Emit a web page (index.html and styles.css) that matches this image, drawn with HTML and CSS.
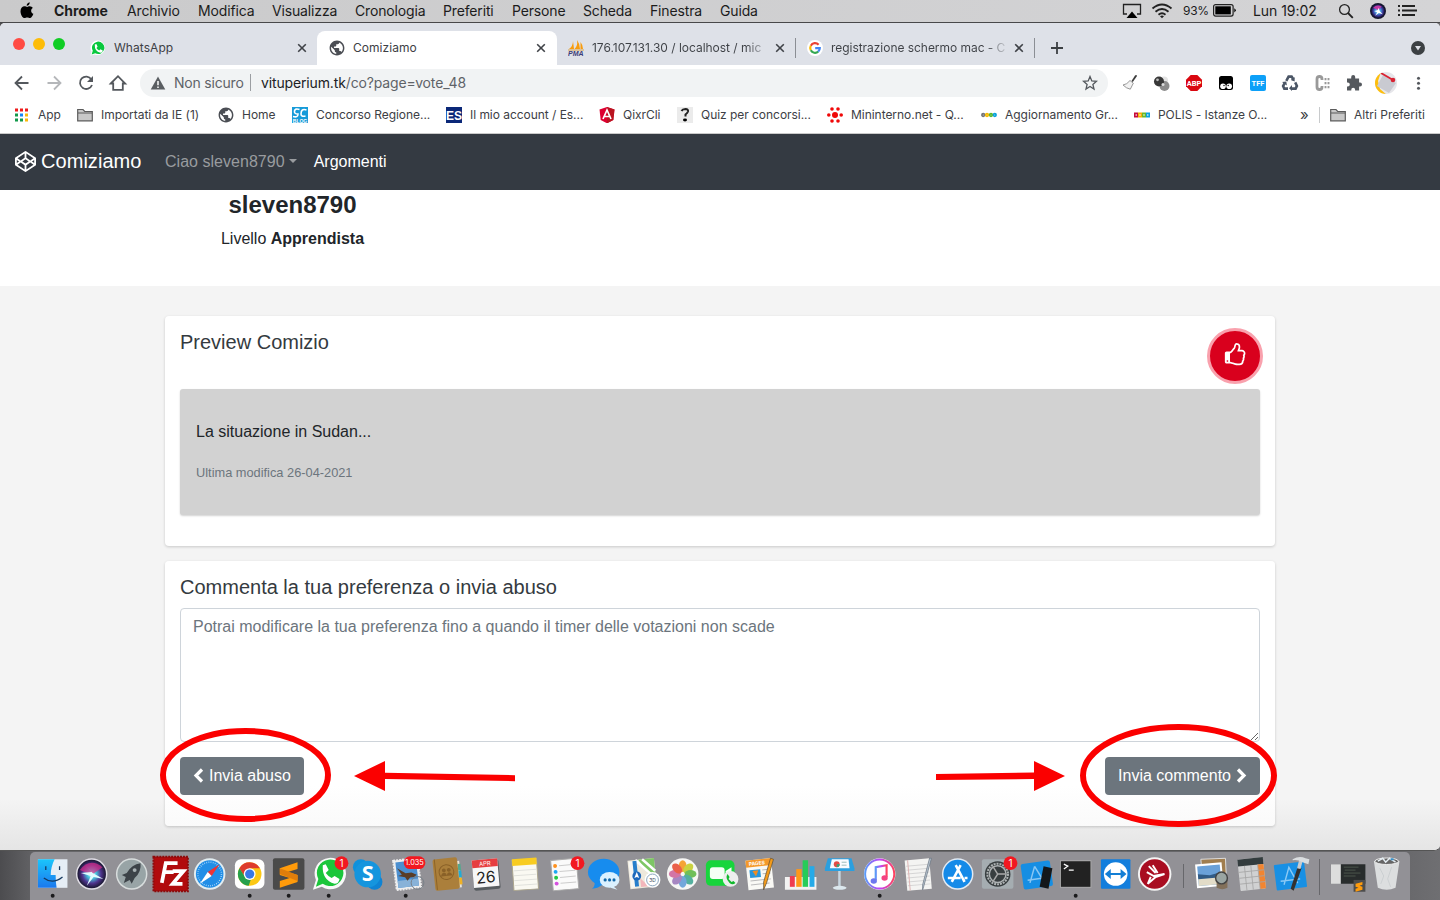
FILE: index.html
```html
<!DOCTYPE html>
<html lang="it">
<head>
<meta charset="utf-8">
<title>Comiziamo</title>
<link rel="stylesheet" href="styles.css">
</head>
<body>
<div class="desktop">
<header class="menubar">
  <svg class="apple" width="14" height="17" viewBox="0 0 14 17"><path d="M9.6 4.3c1.500 0 2.700.8 3.200 1.600-2.400 1.400-2.100 4.800.6 5.900-.6 1.800-2 4.300-3.500 4.300-1 0-1.400-.6-2.700-.6s-1.700.6-2.700.6C2.700 16.100.5 13 .5 9.300c0-3.200 2-5 4-5 1.100 0 2 .7 2.700.7.600 0 1.400-.7 2.400-.7zM9.700.3c.2 1.800-1.300 3.600-3 3.500C6.500 2.200 8 .5 9.700.3z"/></svg>
  <nav class="menus"><b>Chrome</b><span>Archivio</span><span>Modifica</span><span>Visualizza</span><span>Cronologia</span><span>Preferiti</span><span>Persone</span><span>Scheda</span><span>Finestra</span><span>Guida</span></nav>
  <svg class="airplay" width="20" height="16" viewBox="0 0 20 16"><path d="M5 11H1.500V1.500h17V11H15" fill="none" stroke="#222" stroke-width="1.300"/><path d="M10 8.500l5.500 6.500h-11z"/></svg>
  <svg class="wifi" width="22" height="16" viewBox="0 0 22 16" fill="none" stroke="#222" stroke-width="1.900"><path d="M1.500 5.500q9.500-8 19 0M4.500 8.800q6.500-5.400 13 0M7.500 11.700q3.500-2.800 7 0"/><path d="M9 13.300q2-1.400 4 0l-2 2z" fill="#222" stroke="none"/></svg>
  <span class="percent">93%</span>
  <svg class="battery" width="24" height="13" viewBox="0 0 24 13"><rect x=".6" y=".6" width="19.500" height="11.500" rx="2" fill="none" stroke="#222" stroke-width="1.200"/><rect x="2.300" y="2.300" width="15.500" height="8.100"/><path d="M21.300 4.200q3 2.100 0 4.200z"/></svg>
  <span class="clock">Lun 19:02</span>
  <svg class="search" width="16" height="16" viewBox="0 0 16 16" fill="none" stroke="#222" stroke-width="1.300"><circle cx="6.500" cy="6.500" r="4.900"/><path d="M10 10l4.800 4.800" stroke-width="1.800"/></svg>
  <svg class="siri" width="16" height="16" viewBox="0 0 40 40"><defs><radialGradient id="sg"><stop offset="0" stop-color="#fff"/><stop offset=".35" stop-color="#4ba8e8"/><stop offset=".75" stop-color="#3a3092"/><stop offset="1" stop-color="#151533"/></radialGradient></defs><circle cx="20" cy="20" r="20" fill="#15152e"/><circle cx="20" cy="20" r="17" fill="url(#sg)"/><path d="M8 12Q18 2 29 9L21 18z" fill="#c43aa5"/><path d="M21 12l3 8 8 8-10-3-9 7 5-9-8-3 9-1z" fill="#fff"/></svg>
  <svg class="list" width="19" height="13" viewBox="0 0 19 13" stroke="#222" stroke-width="1.800"><path d="M0 2h2M4 2h13M0 6.500h2M4 6.500h15M0 11h2M4 11h13"/></svg>
</header>

<main class="window">
  <div class="tabs">
    <div class="lights"><i class="red"></i><i class="yellow"></i><i class="green"></i></div>
    <div class="tab">
      <svg width="16" height="16" viewBox="0 0 40 40"><path d="M1 39l3-10A18 18 0 1 1 12 36z" fill="#fff"/><path d="M4 36l3-9A15.500 15.500 0 1 1 13 33z" fill="#08c83e"/><path d="M12 11l4-1 3 7-3 3q3 5 7 6l3-3 6 3q0 6-6 6Q11 28 12 11z" fill="#fff"/></svg>
      <span>WhatsApp</span><svg class="x" width="10" height="10" viewBox="0 0 10 10"><path d="M1.200 1.200l7.600 7.600m0-7.600L1.200 8.800"/></svg>
    </div>
    <div class="tab active">
      <svg width="16" height="16" viewBox="1.200 1.200 21.600 21.600"><path d="M12 2C6.480 2 2 6.480 2 12s4.480 10 10 10 10-4.480 10-10S17.520 2 12 2zm-1 17.930c-3.950-.49-7-3.850-7-7.930 0-.62.08-1.210.21-1.790L9 15v1c0 1.100.9 2 2 2v1.930zm6.900-2.540c-.26-.81-1-1.390-1.900-1.390h-1v-3c0-.55-.45-1-1-1H8v-2h2c.55 0 1-.45 1-1V7h2c1.100 0 2-.9 2-2v-.41c2.930 1.190 5 4.060 5 7.410 0 2.080-.8 3.970-2.100 5.390z" class="globe"/></svg>
      <span>Comiziamo</span><svg class="x" width="10" height="10" viewBox="0 0 10 10"><path d="M1.200 1.200l7.600 7.600m0-7.600L1.200 8.800"/></svg>
    </div>
    <div class="tab line">
      <svg width="16" height="16" viewBox="0 0 16 16"><path d="M1 9q4-3 4-8l1 8zM6.500 9Q10 6 9 0q3 4 3 9zM12.500 9V2q2.500 3 2.500 7z" fill="#f89c0e"/><path d="M0 10h16" stroke="#d9a34a"/><text x="0" y="16" class="pma">PMA</text></svg>
      <span class="fade">176.107.131.30 / localhost / mic</span><svg class="x" width="10" height="10" viewBox="0 0 10 10"><path d="M1.200 1.200l7.600 7.600m0-7.600L1.200 8.800"/></svg>
    </div>
    <div class="tab line">
      <svg width="16" height="16" viewBox="0 0 16 16" fill="none" stroke-width="2.200"><circle cx="8" cy="8" r="8" fill="#fff"/><path d="M11.600 4.700A4.800 4.800 0 0 0 3.800 5.700" stroke="#ea4335"/><path d="M3.800 5.700a4.800 4.800 0 0 0 0 4.600" stroke="#fbbc05"/><path d="M3.800 10.300a4.800 4.800 0 0 0 7.400 1.300" stroke="#34a853"/><path d="M11.200 11.600Q12.800 10.200 12.800 8.100H8.200" stroke="#4285f4"/></svg>
      <span class="fade tight">registrazione schermo mac - C</span><svg class="x" width="10" height="10" viewBox="0 0 10 10"><path d="M1.200 1.200l7.600 7.600m0-7.600L1.200 8.800"/></svg>
    </div>
    <svg class="plus" width="12" height="12" viewBox="0 0 12 12"><path d="M6 0v12M0 6h12" stroke="#3c4043" stroke-width="1.800"/></svg>
    <svg class="more" width="14" height="14" viewBox="0 0 14 14"><circle cx="7" cy="7" r="7" fill="#3c4043"/><path d="M4 5h6l-3 4.600z" fill="#dee1e8"/></svg>
  </div>

  <div class="toolbar">
    <svg viewBox="0 0 32 32"><path d="M29 16H16m6.500-6.500L16 16l6.500 6.500" class="ic" transform="translate(-6.500)"/></svg>
    <svg viewBox="0 0 32 32"><path d="M9.500 16h13M16 9.500l6.500 6.500-6.500 6.500" class="ic dim"/></svg>
    <svg viewBox="0 0 32 32"><path d="M21.300 12.200A6.200 6.200 0 1 0 22 18" class="ic"/><path d="M23 9v6h-6z" fill="#54585d"/></svg>
    <svg viewBox="0 0 32 32"><path d="M8.800 16.500L16 9.200l7.200 7.300h-2.400v6.300h-9.600v-6.300z" class="ic"/></svg>
    <div class="omnibox">
      <svg width="16" height="14" viewBox="0 0 16 14"><path d="M8 .5L15.300 13.500H.7z" fill="#5a5e62"/><path d="M8 5v4.300M8 10.500v1.600" stroke="#fff" stroke-width="1.500"/></svg>
      <span class="ns">Non sicuro</span>
      <span class="url"><b>vituperium.tk</b>/co?page=vote_48</span>
      <svg class="star" width="16" height="16" viewBox="0 0 16 16"><path d="M8 1.500l1.800 4.400 4.700.4-3.600 3.100 1.100 4.600-4-2.500L4 14l1.100-4.600-3.600-3.100 4.700-.4z" fill="none" stroke="#54585d" stroke-width="1.300"/></svg>
    </div>
    <svg viewBox="0 0 32 32"><path d="M17.500 14l3.500-5.500q1.500-1 2 .5L18.800 15z" fill="#3c3c3c"/><path d="M16 13.500l3.300 2.700-3 6q-4-.8-7.300-4.200 4-.5 7-4.500z" fill="#f2f2f2" stroke="#8d8d8d" stroke-width=".9"/></svg>
    <svg viewBox="0 0 32 32"><circle cx="18" cy="13.500" r="4" fill="#e4e4e4"/><circle cx="18.500" cy="19" r="5" fill="#8c8c8c"/><circle cx="13" cy="14.500" r="5" fill="#383838"/><circle cx="11.500" cy="12.800" r="1.400" fill="#bbb"/><circle cx="17" cy="17.500" r="1.500" fill="#ddd"/></svg>
    <svg viewBox="0 0 32 32"><path d="M12.700 8h6.600L24 12.700v6.600L19.300 24h-6.600L8 19.300v-6.600z" fill="#da0710"/><text x="16" y="19" class="abp">ABP</text></svg>
    <svg viewBox="0 0 32 32"><rect x="9" y="9" width="14" height="14" rx="2.500"/><circle cx="13" cy="19.300" r="2.800" fill="#fff"/><circle cx="19.200" cy="19.300" r="2.800" fill="#fff"/><circle cx="14" cy="18.500" r=".7"/><circle cx="18.200" cy="18.500" r=".7"/></svg>
    <svg viewBox="0 0 32 32"><rect x="8" y="8" width="16" height="16" rx="2" fill="#0da0f8"/><text x="16" y="19" class="abp">TFF</text></svg>
    <svg viewBox="0 0 32 32" fill="none" stroke="#4b5666" stroke-width="2.600"><path d="M12.300 13.800l2.300-4.200h3l2 3.200M21.200 15.400l1.700 3.500-1.300 2.700h-4M14 21.600h-3.700l-1.200-2.500 1.600-2.900"/><path d="M20.500 10l.2 4.500-4-1.500zM18 18v6l-3-2.800zM8 15l4.300-.6.600 4z" fill="#4b5666" stroke="none"/></svg>
    <svg viewBox="0 0 32 32"><path d="M16 13v-1q0-2.500-2.500-2.500T11 12v8q0 2.500 2.500 2.500T16 20v-1" fill="none" stroke="#999" stroke-width="2.800"/><path d="M19.500 11v2.200m0 1.800v2.200m0 1.800v2.200m3-10.200v2.200m0 1.800v2.200m0 1.800v2.200" stroke="#999" stroke-width="1.900"/></svg>
    <svg viewBox="0 0 32 32"><path d="M9 11.500h4.200v-1.400a2 2 0 0 1 4 0v1.400h3.900v4.100h.9a2 2 0 0 1 0 4h-.9v3.900h-4v-.9a1.900 1.900 0 0 0-3.800 0v.9H9v-3.900h.8a2 2 0 0 0 0-4H9z" fill="#54585d"/></svg>
    <svg viewBox="0 0 32 32"><defs><clipPath id="av"><circle cx="16" cy="16" r="11"/></clipPath></defs><g clip-path="url(#av)"><path d="M5 5h22v22H5z" fill="#e6e6ea"/><path d="M5 5h6l-3 9 2 8 7 6H5z" fill="#fdbe0d"/><path d="M13 8l13 8-7 10-12-7z" fill="#c9cad1"/><path d="M11 6l12 7" stroke="#d92333" stroke-width="2"/><circle cx="23" cy="13" r="2.300" fill="#d92333"/></g></svg>
    <svg viewBox="0 0 32 32"><g fill="#54585d"><circle cx="16.500" cy="11.200" r="1.500"/><circle cx="16.500" cy="16.200" r="1.500"/><circle cx="16.500" cy="21.200" r="1.500"/></g></svg>
  </div>

  <div class="bookmarks">
    <div><svg viewBox="0 0 16 16"><path d="M1 3h3m2 0h3m2 0h3" stroke="#ee1b1b" stroke-width="3"/><path d="M1 8h3" stroke="#12994b" stroke-width="3"/><path d="M6 8h3" stroke="#1785f5" stroke-width="3"/><path d="M11 8h3m-3 5h3" stroke="#fbb709" stroke-width="3"/><path d="M1 13h3m2 0h3" stroke="#12994b" stroke-width="3"/></svg><span>App</span></div>
    <div><svg viewBox="0 0 16 16"><path d="M.7 13.800V2.500H6l1.700 2h7.600v9.300z" fill="#c8c8c8" stroke="#5b5b5b" stroke-width="1.200"/><path d="M1 6h14" stroke="#5b5b5b"/></svg><span>Importati da IE (1)</span></div>
    <div><svg viewBox="1.200 1.200 21.600 21.600"><path d="M12 2C6.480 2 2 6.480 2 12s4.480 10 10 10 10-4.480 10-10S17.520 2 12 2zm-1 17.930c-3.950-.49-7-3.850-7-7.930 0-.62.08-1.210.21-1.790L9 15v1c0 1.100.9 2 2 2v1.930zm6.900-2.540c-.26-.81-1-1.390-1.900-1.390h-1v-3c0-.55-.45-1-1-1H8v-2h2c.55 0 1-.45 1-1V7h2c1.100 0 2-.9 2-2v-.41c2.930 1.190 5 4.060 5 7.410 0 2.080-.8 3.970-2.100 5.390z" class="globe"/></svg><span>Home</span></div>
    <div><svg viewBox="0 0 16 16"><path d="M0 0h16v16H0z" fill="#179bd9"/><path d="M7.500 2.500Q3 1 2.500 4t3.500 3q0 4-5 2.500M14.500 3Q9 1 9 7q0 3 4.500 2" fill="none" stroke="#fff" stroke-width="1.600"/><text x="8" y="15.500" class="tiny">BLOG</text></svg><span>Concorso Regione...</span></div>
    <div><svg viewBox="0 0 16 16"><path d="M0 0h16v16H0z" fill="#0b2878"/><text x="8" y="13" class="es">ES</text></svg><span>Il mio account / Es...</span></div>
    <div><svg viewBox="0 0 16 16"><path d="M8 0l7.500 2.600L14.300 13 8 16.300 1.700 13 .5 2.600z" fill="#dd0031"/><path d="M8 0l7.500 2.600L14.300 13 8 16.300z" fill="#b91420"/><path d="M4 12L8 3l4 9M5.500 9.500h5" fill="none" stroke="#fff" stroke-width="1.700"/></svg><span>QixrCli</span></div>
    <div><svg viewBox="0 0 16 16"><path d="M0 0h16v16H0z" fill="#ebebeb"/><path d="M4.500 4q1-2 4-2 3 .2 2.500 2.500Q10.500 6 8.500 7.500v2" fill="none" stroke="#222" stroke-width="2"/><ellipse cx="8" cy="13" rx="2" ry="1.400"/></svg><span>Quiz per concorsi...</span></div>
    <div><svg viewBox="0 0 16 16" fill="#f00808"><circle cx="8" cy="8" r="3"/><circle cx="5" cy="2" r="1.800"/><circle cx="11" cy="2" r="1.800"/><circle cx="1.800" cy="8" r="1.800"/><circle cx="14.200" cy="8" r="1.800"/><circle cx="5" cy="14" r="1.800"/><circle cx="11" cy="14" r="1.800"/></svg><span>Mininterno.net - Q...</span></div>
    <div><svg viewBox="0 0 16 16" fill="none" stroke-width="1.700"><circle cx="2.200" cy="8" r="1.300" stroke="#777"/><circle cx="6" cy="8" r="1.300" stroke="#f5b900"/><circle cx="10" cy="8" r="1.300" stroke="#5ab62c"/><circle cx="13.800" cy="8" r="1.300" stroke="#0aa2dd"/></svg><span>Aggiornamento Gr...</span></div>
    <div><svg viewBox="0 0 16 16"><path d="M0 5.500h4v5H0z" fill="#c50b3b"/><path d="M4 5.500h4v5H4z" fill="#f4ae00"/><path d="M8 5.500h4v5H8z" fill="#67b82e"/><path d="M12 5.500h4v5h-4z" fill="#0aa2dd"/><g fill="#fff"><circle cx="2.200" cy="8" r=".8"/><circle cx="6" cy="8" r=".8"/><circle cx="10" cy="8" r=".8"/><circle cx="13.800" cy="8" r=".8"/></g></svg><span>POLIS - Istanze O...</span></div>
    <div class="chev">»</div>
    <div class="other"><svg viewBox="0 0 16 16"><path d="M.7 13.800V2.500H6l1.700 2h7.600v9.300z" fill="#c8c8c8" stroke="#5b5b5b" stroke-width="1.200"/><path d="M1 6h14" stroke="#5b5b5b"/></svg><span>Altri Preferiti</span></div>
  </div>

  <section class="page">
    <nav class="navbar">
      <svg width="21" height="21" viewBox="0 0 1792 1792"><path fill="#fff" d="M216 1169l603 402v-359l-334-223zm-62-144l193-129-193-129v258zm819 546l603-402-269-180-334 223v359zm-77-494l272-182-272-182-272 182zm-411-274l334-223v-359l-603 402zm960 93l193 129v-258zm-138-93l269-180-603-402v359zm485-180v546q0 41-34 64l-819 546q-21 13-43 13t-43-13l-819-546q-34-23-34-64v-546q0-41 34-64l819-546q21-13 43-13t43 13l819 546q34 23 34 64z"/></svg>
      <span class="brand">Comiziamo</span><span class="hello">Ciao sleven8790</span><i class="caret"></i><span class="topics">Argomenti</span>
    </nav>
    <div class="profile"><div class="person"><h1>sleven8790</h1><p>Livello <b>Apprendista</b></p></div></div>
    <div class="content">
      <article class="card preview">
        <div class="head"><h2>Preview Comizio</h2>
          <button class="vote"><svg width="24" height="24" viewBox="0 0 1792 1792"><path fill="#fff" d="M320 1344q0-26-19-45t-45-19-45 19-19 45 19 45 45 19 45-19 19-45zm1152-576q0-51-39-89.500t-89-38.500h-352q0-58 48-159.500t48-160.500q0-98-32-145t-128-47q-26 26-38 85t-30.500 125.500-59.500 109.500q-22 23-77 91-4 5-23 30t-31.500 41-34.500 42.500-40 44-38.500 35.500-40 27-35.500 9h-32v640h32q13 0 31.500 3t33 6.500 38 11 35 11.500 35.500 12.500 29 10.500q211 73 342 73h121q192 0 192-167 0-26-5-56 30-16 47.500-52.500t17.500-73.500-18-69q53-50 53-119 0-25-10-55.500t-25-47.500q32-1 53.500-47t21.500-81zm128-1q0 89-49 163 9 33 9 69 0 77-38 144 3 21 3 43 0 101-60 178 1 139-85 219.500t-227 80.500h-129q-96 0-189.500-22.500t-216.500-65.500q-116-40-138-40h-288q-53 0-90.500-37.500t-37.500-90.500v-640q0-53 37.500-90.500t90.500-37.500h274q36-24 137-155 58-75 107-128 24-25 35.500-85.500t30.500-126.500 62-108q39-37 90-37 84 0 151 32.500t102 101.500 35 186q0 93-48 192h176q104 0 180 76t76 179z"/></svg></button>
        </div>
        <div class="quote"><p>La situazione in Sudan...</p><small>Ultima modifica 26-04-2021</small></div>
      </article>
      <article class="card comment">
        <h2>Commenta la tua preferenza o invia abuso</h2>
        <textarea placeholder="Potrai modificare la tua preferenza fino a quando il timer delle votazioni non scade"></textarea>
        <div class="actions">
          <button class="btn"><svg width="11" height="15" viewBox="0 0 11 15"><path d="M9 1.500l-6 6 6 6"/></svg>Invia abuso</button>
          <button class="btn">Invia commento<svg width="11" height="15" viewBox="0 0 11 15"><path d="M2 1.500l6 6-6 6"/></svg></button>
        </div>
      </article>
    </div>
  </section>
</main>

<footer class="dock-area"><div class="dock">
<svg viewBox="0 0 40 48"><defs><linearGradient id="fi" y2="1" x2="0"><stop stop-color="#1bc5fb"/><stop offset="1" stop-color="#1b78ee"/></linearGradient></defs><path d="M5 7h30v29H5z" fill="#e6eef6"/><path d="M5 7h17q-4 8-4 16h5q0 7 1 13H5z" fill="url(#fi)"/><path d="M13 14v4m14-4v4M11 26q9 7 19-1" stroke="#16395f" stroke-width="1.300" fill="none"/><circle class="run" cx="20" cy="44" r="2"/></svg>
<svg viewBox="0 0 40 48"><defs><radialGradient id="sr"><stop offset="0" stop-color="#fff"/><stop offset=".3" stop-color="#45c9df"/><stop offset=".65" stop-color="#50348f"/><stop offset="1" stop-color="#18162f"/></radialGradient></defs><circle cx="20" cy="22" r="16" fill="#e0dde5"/><circle cx="20" cy="22" r="14.500" fill="url(#sr)"/><path d="M8 18Q18 5 31 15l-11 8z" fill="#d72c87" opacity=".7"/><path d="M14 13l7 8 11 6-10-2-7 9 4-10-10-3 11-1z" fill="#dffbff"/></svg>
<svg viewBox="0 0 40 48"><circle cx="20" cy="22" r="16" fill="#d8dddd"/><circle cx="20" cy="22" r="14.500" fill="#98a4a6"/><path d="M29 11q-9 1-14 10l-5 2 4 2-2 6 6-3 2 4 3-6q7-6 6-15z" fill="#3c4348"/><circle cx="23" cy="18" r="2" fill="#a7b0b2"/></svg>
<svg viewBox="0 0 40 48"><path d="M2.500 4.500h35v35h-35z" fill="#b10b0d" stroke="#8b0c0d" stroke-width="2" stroke-dasharray="2 1"/><path d="M11 31l4-20h12M13 20h10M22 19h11L22 32h10" fill="none" stroke="#fff" stroke-width="3.800"/></svg>
<svg viewBox="0 0 40 48"><circle cx="20" cy="22" r="16" fill="#e2edf1"/><circle cx="20" cy="22" r="14" fill="#218ee7"/><circle cx="20" cy="22" r="12" fill="none" stroke="#bfe2fa" stroke-width="1.500" stroke-dasharray=".7 1.500"/><path d="M30 12l-8 12-4-4z" fill="#ef3334"/><path d="M10 32l8-12 4 4z" fill="#fff"/></svg>
<svg viewBox="0 0 40 48"><rect x="5" y="7" width="30" height="30" rx="6" fill="#fff"/><circle cx="20" cy="22" r="12" fill="#fcc814"/><path d="M9.600 16A12 12 0 0 1 30.400 16H20l-5 9z" fill="#de3b2e"/><path d="M9.600 16L16 26l5 2-2 6A12 12 0 0 1 9.600 16z" fill="#26a04b"/><circle cx="20" cy="22" r="6" fill="#fff"/><circle cx="20" cy="22" r="4.700" fill="#3978e4"/><circle class="run" cx="20" cy="44" r="2"/></svg>
<svg viewBox="0 0 40 48"><rect x="4" y="6" width="32" height="32" rx="2" fill="#4a4a4a"/><path d="M11 16l18-6v7l-10 3 10 3v7l-18 6v-7l10-3-10-3z" fill="#ff9b0b"/><path d="M11 16l18 7v6l-18-7z" fill="#df7d0b"/><circle class="run" cx="20" cy="44" r="2"/></svg>
<svg viewBox="0 0 40 48"><path d="M4 38l3-10A16 16 0 1 1 13 35z" fill="#f8f8f8"/><path d="M7 35l2.500-8A13.500 13.500 0 1 1 14 32z" fill="#1bc63b"/><path d="M14 13l3-1 3 6-3 3q3 4 6 5l3-2 5 3q-1 5-5 5Q13 28 14 13z" fill="#fff"/><circle cx="33" cy="11" r="7" class="badge"/><text x="33" y="14.500" class="count">1</text><circle class="run" cx="20" cy="44" r="2"/></svg>
<svg viewBox="0 0 40 48"><circle cx="13" cy="15" r="8" fill="#0f91dc"/><circle cx="27" cy="30" r="8" fill="#0f83d3"/><circle cx="20" cy="22" r="13.500" fill="#1595de"/><text x="20" y="29.500" class="sky">S</text></svg>
<svg viewBox="0 0 40 48"><g transform="rotate(-7 20 22)"><path d="M8 7h25v30H8z" fill="#eee" stroke="#eee" stroke-width="2" stroke-dasharray="2 1"/><path d="M10 9h21v26H10z" fill="#4b8fd0"/><path d="M10 28h21v7H10z" fill="#88b2d8"/><path d="M11 15l8 6 6 0 5 3-3 2-4 0-3 3-2-4-7-2 4-1z" fill="#5a3d26"/></g><circle cx="31" cy="31" r="6.500" fill="none" stroke="#777f88"/><rect x="17" y="4" width="22" height="13" rx="6.500" class="badge"/><text x="28" y="13.300" class="mailcount">1.035</text><circle class="run" cx="19" cy="44" r="2"/></svg>
<svg viewBox="0 0 40 48"><g transform="rotate(-6 20 22)"><path d="M29 10h5v27h-5z" fill="#e9e4d8"/><path d="M32 13h3v7h-3z" fill="#55a78e"/><path d="M32 20h3v7h-3z" fill="#22acd6"/><path d="M32 27h3v7h-3z" fill="#efb125"/><rect x="7" y="6" width="25" height="32" rx="2" fill="#ab7f3b"/><path d="M9 6v31" stroke="#8d6428"/><circle cx="20" cy="20" r="7.500" fill="none" stroke="#8a6128"/><g fill="#8a6128"><circle cx="17.500" cy="18" r="2"/><circle cx="22.500" cy="18" r="2"/><path d="M14 24q1-3.500 3.500-3.500t2.500 3q.5-3 2.500-3t3.500 3.500z"/></g></g></svg>
<svg viewBox="0 0 40 48"><g transform="rotate(-5 20 22)"><rect x="7" y="8" width="27" height="30" rx="2" fill="#585d60"/><path d="M7 7h26v28H7z" fill="#f7f7f7"/><path d="M7 7h26v8H7z" fill="#e63e40"/><text x="20" y="13.500" class="apr">APR</text><text x="20" y="31" class="day">26</text></g></svg>
<svg viewBox="0 0 40 48"><g transform="rotate(-4 20 22)"><path d="M8 7h25v31H8z" fill="#faf9f2" stroke="#aca68e"/><path d="M8 6h25v7H8z" fill="#f8cc21"/><path d="M9 18h23M9 23h23M9 28h23M9 33h23" stroke="#d6d7d3" stroke-width=".7"/></g></svg>
<svg viewBox="0 0 40 48"><g transform="rotate(-5 20 22)"><path d="M7 7h26v31H7z" fill="#fafafa" stroke="#aaa"/><path d="M15 13h16M15 19h16M15 25h16M15 31h16" stroke="#ccc"/><circle cx="11" cy="13" r="2" fill="#ff911e"/><circle cx="11" cy="19" r="2" fill="#1ca7f4"/><circle cx="11" cy="25" r="2" fill="#23c945"/><circle cx="11" cy="31" r="2" fill="#d550e0"/></g><circle cx="33" cy="11" r="7" class="badge"/><text x="33" y="14.500" class="count">1</text></svg>
<svg viewBox="0 0 40 48"><ellipse cx="20" cy="20" rx="16" ry="13.500" fill="#178cee"/><path d="M11 30q0 5-3 7 7 0 11-5z" fill="#178cee"/><ellipse cx="26" cy="28" rx="10" ry="8" fill="#dbf1ff"/><path d="M29 34l5 4-7-2z" fill="#dbf1ff"/><g fill="#1268a9"><circle cx="21.500" cy="28" r="1.600"/><circle cx="26" cy="28" r="1.600"/><circle cx="30.500" cy="28" r="1.600"/></g></svg>
<svg viewBox="0 0 40 48"><g transform="rotate(-6 20 22)"><path d="M6 7h27v29H6z" fill="#eee9dc"/><path d="M17 7h16v15h-7z" fill="#7dc665"/><path d="M21 7l12 13M14 7l18 20" fill="none" stroke="#fff" stroke-width="2.500"/><path d="M7 8h5v27H7z" fill="#f8f7f3"/><path d="M13 8v26" stroke="#277fcb" stroke-width="4"/><path d="M17 26l8 9h-8z" fill="#f3b6bb"/></g><circle cx="14" cy="24" r="4.500" fill="#1e69bc"/><path d="M14 20l2.500 6-2.500-1-2.500 1z" fill="#fff"/><circle cx="30" cy="28" r="8" fill="#fff"/><circle cx="30" cy="28" r="6" fill="none" stroke="#8ba5bd"/><text x="30" y="30" class="deg">3D</text></svg>
<svg viewBox="0 0 40 48"><circle cx="20" cy="22" r="16" fill="#f7f7f5"/><g transform="translate(20 22)" opacity=".9"><ellipse cy="-8" rx="4" ry="6" fill="#f59a20"/><ellipse cy="-8" rx="4" ry="6" fill="#c6cf2d" transform="rotate(45)"/><ellipse cy="-8" rx="4" ry="6" fill="#62b949" transform="rotate(90)"/><ellipse cy="-8" rx="4" ry="6" fill="#43a995" transform="rotate(135)"/><ellipse cy="-8" rx="4" ry="6" fill="#659fd9" transform="rotate(180)"/><ellipse cy="-8" rx="4" ry="6" fill="#9e7bbd" transform="rotate(225)"/><ellipse cy="-8" rx="4" ry="6" fill="#d0679e" transform="rotate(270)"/><ellipse cy="-8" rx="4" ry="6" fill="#e95037" transform="rotate(315)"/></g></svg>
<svg viewBox="0 0 40 48"><rect x="4" y="8" width="29" height="26" rx="5" fill="#17d53c"/><rect x="8" y="15" width="15" height="12" rx="3" fill="#f5fff5"/><path d="M24 19l6-4v12l-6-4z" fill="#f5fff5"/><circle cx="29" cy="27" r="8" fill="#eee"/><path d="M26 22l2 3-1 2 3 3 2-1 2 2q-3 3-6 0-5-5-2-9z" fill="#12b92d"/></svg>
<svg viewBox="0 0 40 48"><g transform="rotate(-6 20 22)"><path d="M6 7h26v30H6z" fill="#f9f9f5"/><path d="M6 7h26v7H6z" fill="#f4992a"/><path d="M9 17h11v8H9z" fill="#2796dc"/><path d="M12 18h6l-3 6z" fill="#ed8d24"/><path d="M22 18h8M22 22h8M9 28h21M9 32h19" stroke="#bbb"/><text x="9" y="12.500" class="pgs">PAGES</text></g><path d="M33 7l-7 24-3 7V30L30 6z" fill="#f59b19" stroke="#584c36" stroke-width=".7"/></svg>
<svg viewBox="0 0 40 48"><path d="M4 25h32v13H4z" fill="#f2f2f2"/><path d="M9 24h5v11H9z" fill="#ef3c50"/><path d="M15.500 17H21v18h-5.500z" fill="#ff9818"/><path d="M22 8h5.500v27H22z" fill="#27cc58"/><path d="M29 14h5v21h-5z" fill="#25aae8"/></svg>
<svg viewBox="0 0 40 48"><path d="M18.500 18h2.500v18h-2.500z" fill="#c8d6e0"/><ellipse cx="20" cy="36" rx="7" ry="2" fill="#dce8ee"/><path d="M8 6h24l3 10v3H5v-3z" fill="#2b9fdf"/><path d="M12 7h17l1 9H10z" fill="#f8fbff"/><circle cx="17" cy="12" r="3" fill="#e34c45"/><path d="M17 12h3q0 3-3 3z" fill="#35a67b"/><path d="M22 10h5m-5 3h5" stroke="#9bb"/></svg>
<svg viewBox="0 0 40 48"><defs><linearGradient id="mu" x2="1"><stop stop-color="#5a9bf7"/><stop offset=".5" stop-color="#bf43f7"/><stop offset="1" stop-color="#ff435f"/></linearGradient></defs><circle cx="20" cy="22" r="16" fill="#fff"/><circle cx="20" cy="22" r="14.800" fill="#fff" stroke="url(#mu)" stroke-width="2"/><path d="M16 28V15l11-2v12" fill="none" stroke="url(#mu)" stroke-width="2.200"/><ellipse cx="14" cy="29" rx="3.200" ry="2.800" fill="#6c78ee"/><ellipse cx="25" cy="26" rx="3.200" ry="2.800" fill="#f44281"/><circle class="run" cx="20" cy="44" r="2"/></svg>
<svg viewBox="0 0 40 48"><g transform="rotate(-5 20 22)"><path d="M7 7h25v31H7z" fill="#f4f4f2"/><path d="M8 13h23M8 17h23M8 21h23M8 25h23M8 29h23M8 33h23" stroke="#d5d5d5"/><path d="M10 7v31" stroke="#ddb4b4"/></g><path d="M33 6l-8 29-1 3V33L31 6z" fill="#b9c5d0" stroke="#66727f" stroke-width=".7"/></svg>
<svg viewBox="0 0 40 48"><circle cx="20" cy="22" r="16" fill="#e2eaf3"/><circle cx="20" cy="22" r="14.500" fill="#158ae8"/><path d="M14 30l9-17m-5 0l9 17M10 26h13m4 0h3" stroke="#fff" stroke-width="2.600" fill="none"/></svg>
<svg viewBox="0 0 40 48"><rect x="4" y="7" width="32" height="30" rx="2" fill="#a5adb1"/><circle cx="20" cy="22" r="13" fill="#383e40"/><circle cx="20" cy="22" r="10.500" fill="none" stroke="#aeb3b4" stroke-width="2" stroke-dasharray="2 1"/><circle cx="20" cy="22" r="8.500" fill="none" stroke="#aeb3b4" stroke-width="1.500"/><path d="M20 22l8 0M20 22l-5-8M20 22l-5 8" stroke="#aaa" stroke-width="1.500"/><circle cx="33" cy="11" r="7" class="badge"/><text x="33" y="14.500" class="count">1</text></svg>
<svg viewBox="0 0 40 48"><g transform="rotate(-8 20 22)"><rect x="5" y="10" width="30" height="26" rx="2" fill="#168ee3"/><path d="M12 30l7-16m0 0l7 16M10 27h18" stroke="#8ac7f3" stroke-width="1.500" fill="none"/></g><path d="M27 14l9 2-4 21-9-2z" fill="#14171a"/></svg>
<svg viewBox="0 0 40 48"><path d="M4 8h32v28H4z" fill="#aaa"/><path d="M5 9h30v26H5z" fill="#222"/><path d="M8 12l4 2-4 3M13 18h5" stroke="#fff" stroke-width="1.300" fill="none"/><circle class="run" cx="20" cy="44" r="2"/></svg>
<svg viewBox="0 0 40 48"><rect x="5" y="7" width="30" height="30" rx="1" fill="#137edc"/><circle cx="20" cy="22" r="12" fill="#fff"/><path d="M9 22l6-5v4h10v-4l6 5-6 5v-4H15v4z" fill="#137ed5"/></svg>
<svg viewBox="0 0 40 48"><circle cx="20" cy="22" r="17" fill="#f4f4f4"/><circle cx="20" cy="22" r="15" fill="#a90d21"/><path d="M14 14l7 7m-3-8l5 8m-11-1l7 4 11-2-9 3-8 7 3-7" fill="none" stroke="#fff" stroke-width="2"/></svg>
<i class="sep first"></i>
<svg viewBox="0 0 40 48"><path d="M9 7l25-1 1 22-24 2z" fill="#a07e4f" stroke="#ddd"/><g transform="rotate(-5 20 22)"><path d="M4 11h27v24H4z" fill="#fff"/><path d="M6 13h23v20H6z" fill="#6aa1d8"/><path d="M6 25h23v8H6z" fill="#e2dcc8"/><path d="M6 21l12 2 11-2v5H6z" fill="#315b85"/></g><path d="M25 28h11v8q-5 3-11 0z" fill="#82705a"/><circle cx="30" cy="26" r="6" fill="#9aa5a2" stroke="#444" stroke-width="1.500"/></svg>
<svg viewBox="0 0 40 48"><g transform="rotate(-6 20 22)"><rect x="7" y="6" width="26" height="32" rx="1" fill="#d0d1d2"/><path d="M7 6h26v7H7z" fill="#333c3e"/><path d="M27 13h6v25h-6z" fill="#f28531"/><path d="M7 19h26M7 25h26M7 31h26M13.500 13v25M20 13v25M27 13v25" stroke="#a5a5a5" stroke-width=".8"/></g></svg>
<svg viewBox="0 0 40 48"><g transform="rotate(-7 20 22)"><rect x="4" y="11" width="31" height="26" rx="1" fill="#1890e4"/><path d="M12 32l7-17 7 17M9 28h20" stroke="#8dcaf5" stroke-width="1.400" fill="none"/></g><path d="M27 15l-7 22 3 2 8-23z" fill="#34302e"/><path d="M28.500 8l3.500 1-2 8-3.500-1z" fill="#c9cccf"/><path d="M22 7q7-4 13-1l4 1-1 5-6-2q-5-3-10-2z" fill="#dadddf"/></svg>
<i class="sep"></i>
<svg viewBox="0 0 40 48"><path d="M3 12h35v20H3z" fill="#282c2c"/><path d="M3 12h10v20H3z" fill="#ddd"/><path d="M16 15h15M17 18h11M16 21h17M16 24h12" stroke="#4d574d"/><path d="M26 28h12v12H26z" fill="#4d4d4d"/><path d="M28 32l7-2v3l-3 1 3 1v3l-7 2v-3l3-1-3-1z" fill="#ff9b0b"/></svg>
<svg viewBox="0 0 40 48"><path d="M7 9q13-5 26 0l-4 27q-9 4-18 0z" fill="#dcdedf"/><ellipse cx="20" cy="9" rx="12" ry="3.300" fill="#666" stroke="#eee"/><path d="M11 9l5-3 3 4 4-4 6 4" stroke="#e6eef3" stroke-width="1.500" fill="none"/><path d="M13 16l4 8-3 8m11-17l-4 12 3 8" stroke="#cbcfd1" fill="none"/><path d="M24 7h3" stroke="#348fc9" stroke-width="2"/></svg>
</div></footer>
<svg class="annotations" width="1440" height="900" viewBox="0 0 1440 900"><g fill="none" stroke="#fb0000" stroke-width="6"><ellipse cx="245.500" cy="775" rx="82.500" ry="44"/><ellipse cx="1178.500" cy="775.500" rx="95.500" ry="48.500"/></g><path d="M354 776l31-15v11.700l130 2.500v6L385 779v12zM1065 776l-31-15v11.500l-98 1.500v6l98-1v12z" fill="#fb0000"/></svg>
</div>
</body>
</html>
```
FILE: styles.css
```css
* { box-sizing: border-box; }
body { margin: 0; font-family: "Liberation Sans", Arial, sans-serif; }
h1, h2, p { margin: 0; }
.desktop { position: relative; width: 1440px; height: 900px; overflow: hidden; background: linear-gradient(90deg, #4c4c4f, #67676a 40px, #67676a 1400px, #6f6f72); display: flex; flex-direction: column; }
.menubar, .tabs, .toolbar, .bookmarks { font-family: Inter, sans-serif; }
.menubar { height: 23px; flex: none; display: flex; align-items: center; padding: 0 0 1px 20px; background: linear-gradient(90deg, #cacacb, #d4d4d6); border-bottom: 1px solid #48484a; font-size: 14px; line-height: 16px; color: #1c1c1c; white-space: nowrap; }
.menubar svg { flex: none; }
.apple { margin: -1px 20px 0 0; }
.menus { display: grid; grid-template-columns: 73px 71px 74px 83px 88px 69px 71px 67px 70px 402px; letter-spacing: -.15px; }
.menus b { letter-spacing: -.05px; }
.airplay { margin-right: 9px; }
.wifi { margin-right: 10px; }
.percent { width: 30px; font-size: 12px; letter-spacing: -.3px; }
.battery { width: 24px; margin-right: 16px; }
.clock { width: 85px; letter-spacing: -.05px; }
.search { margin-right: 16px; }
.siri { margin-right: 12px; }
.window { height: 828px; flex: none; overflow: hidden; background: #fff; border-radius: 5px 5px 6px 0; border-bottom: 1px solid #545454; }
.tabs { height: 42px; padding-left: 13px; display: flex; align-items: center; background: #dee1e8; font-size: 12px; color: #3d4045; }
.lights { width: 64px; display: flex; gap: 8px; }
.lights i { width: 12px; height: 12px; border-radius: 50%; }
.red { background: #ff4b43; }
.yellow { background: #fdbc08; }
.green { background: #10cd24; }
.tab { width: 240px; height: 34px; margin-top: 8px; padding: 0 11px 0 12px; display: flex; align-items: center; gap: 8px; white-space: nowrap; }
.tab:nth-child(2) { padding: 0 10px 0 13px; }
.tab > svg { flex: none; }
.tab span { flex: 1; width: 0; margin-top: -1px; letter-spacing: .05px; }
.tab.active { background: #fff; border-radius: 8px 8px 0 0; }
.tab.line { width: 239px; padding-left: 11px; background: linear-gradient(#8b8e94, #8b8e94) right 7px / 1px 20px no-repeat; }
.tab .fade { letter-spacing: -.02px; color: transparent; background: linear-gradient(90deg, #3d4045 88%, #c6c9cf); -webkit-background-clip: text; background-clip: text; }
.tab .tight { letter-spacing: -.04px; }
.x path { stroke: #3f4247; stroke-width: 1.600; }
.globe { fill: #4b4e54; }
.pma { font: italic bold 7px "Liberation Sans"; fill: #3c3c78; }
.plus { margin: 8px 0 0 16px; }
.more { margin: 8px 15px 0 auto; }
.toolbar { height: 36px; padding-left: 6px; display: flex; align-items: center; }
.toolbar > svg { width: 32px; height: 32px; flex: none; }
.ic { fill: none; stroke: #54585d; stroke-width: 1.800; }
.dim { stroke: #b5b7ba; }
.omnibox { width: 968px; height: 28px; margin: 0 6px; padding: 0 10px; border-radius: 14px; background: #f1f3f4; display: flex; align-items: center; font-size: 14px; color: #5f6368; }
.ns { margin: -1px 0 0 8px; width: 77px; border-right: 1px solid #9b9ea2; letter-spacing: -.2px; white-space: nowrap; line-height: 17px; }
.url { margin: -2px 0 0 10px; letter-spacing: -.14px; }
.url b { font-weight: 400; color: #202124; }
.star { margin-left: auto; }
.abp { font: bold 7.500px Roboto; fill: #fff; text-anchor: middle; }
.bookmarks { height: 33px; padding: 0 0 5px 14px; display: grid; grid-template-columns: 63px 141px 74px 154px 153px 78px 150px 154px 153px 166px 19px 121px; align-items: center; border-bottom: 1px solid #cacaca; font-size: 12px; color: #3d4045; }
.bookmarks > div { display: flex; align-items: center; gap: 8px; white-space: nowrap; letter-spacing: -.04px; }
.bookmarks svg { width: 16px; height: 16px; flex: none; }
.tiny { font: bold 5px "Liberation Sans"; fill: #fff; text-anchor: middle; }
.es { font: bold 12px "Liberation Sans"; fill: #fff; text-anchor: middle; }
.bookmarks .other { border-left: 1px solid #c8cacc; padding-left: 10px; letter-spacing: 0; }
.chev { font-size: 15px; }
.page { height: 716px; background: linear-gradient(#f4f4f4 665px, #e5e5e5); }
.navbar { height: 56px; padding-left: 15px; background: #343a42; color: #fff; display: flex; align-items: center; }
.navbar svg { margin-top: -2px; }
.brand { margin-left: 5px; font-size: 20px; width: 124px; margin-top: -2px; letter-spacing: .05px; }
.hello { color: #999c9f; font-size: 16px; margin-top: -1px; letter-spacing: .03px; }
.caret { border: 4.800px solid transparent; border-top-color: #999c9f; border-bottom: 0; margin: -3px 0 0 4px; }
.topics { font-size: 16px; margin: -1px 0 0 17px; }
.profile { height: 96px; background: #fff; padding-left: 165px; }
.person { width: 255px; text-align: center; color: #212529; }
.person h1 { font-size: 24px; line-height: 29px; }
.person p { font-size: 16px; line-height: 24px; margin-top: 8px; }
.content { padding: 30px 165px 0; display: flex; flex-direction: column; gap: 15px; }
.card { background: #fff; border-radius: 4px; box-shadow: 0 1px 3px rgba(0, 0, 0, .18); padding: 15px; }
.preview { height: 230px; }
.comment { height: 265px; background: linear-gradient(#fff 225px, #fafafa); }
.card h2 { font-size: 20px; line-height: 24px; font-weight: 400; color: #343a40; }
.head { display: flex; justify-content: space-between; height: 58px; }
.head h2 { margin-top: -1px; }
.vote { width: 56px; height: 56px; margin: -3px -3px 0 0; padding: 0 0 3px 2px; border: 3px solid #f9a1ad; border-radius: 50%; background: #d9001d; display: grid; place-items: center; }
.quote { height: 126px; padding: 31px 16px 0; border-radius: 3px; background: #d2d2d2; box-shadow: 0 1px 2px rgba(0, 0, 0, .18); color: #212529; }
.quote p { font-size: 16px; line-height: 24px; }
.quote small { display: block; margin-top: 20px; color: #6c757d; font-size: 12.800px; line-height: 18px; }
.comment h2 { margin-top: -1px; margin-bottom: 9px; }
.comment textarea { display: block; width: 100%; height: 134px; padding: 6px 12px; border: 1px solid #ced4da; border-radius: 4px; background: #fff; font: 16px/24px "Liberation Sans", Arial, sans-serif; }
.comment textarea::placeholder { color: #6c757d; }
.actions { display: flex; justify-content: space-between; margin-top: 15px; }
.btn { height: 38px; padding: 0 13px; display: flex; align-items: center; gap: 5px; border: 0; border-radius: 4px; background: #6c757d; color: #fff; font: 16px "Liberation Sans", Arial, sans-serif; }
.btn path { fill: none; stroke: #fff; stroke-width: 3.200; }
.btn svg { margin-top: -2px; }
.dock-area { flex: 1; padding: 1px 30px 0; }
.dock { height: 48px; padding-left: 3px; border-radius: 5px 5px 0 0; background: #929196; display: flex; }
.dock svg { width: 39.360px; height: 48px; flex: none; overflow: visible; }
.sep { width: 1px; height: 36px; margin: 7px 8px 0; background: #67676b; }
.sep.first { height: 24px; margin: 12px 8px 0 9px; }
.run { fill: #1b1b1d; }
.badge { fill: #f21820; }
.count { font: 10px Inter; fill: #fff; text-anchor: middle; }
.mailcount { font: 7.500px Inter; fill: #fff; text-anchor: middle; }
.sky { font: bold 22px "Open Sans"; fill: #fff; text-anchor: middle; }
.apr { font: 6px Inter; fill: #fff; text-anchor: middle; }
.day { font: 16px Inter; fill: #222; text-anchor: middle; }
.deg { font: 5px Inter; fill: #345; text-anchor: middle; }
.pgs { font: bold 5px Inter; fill: #fff; }
.annotations { position: absolute; left: 0; top: 0; pointer-events: none; }
```
